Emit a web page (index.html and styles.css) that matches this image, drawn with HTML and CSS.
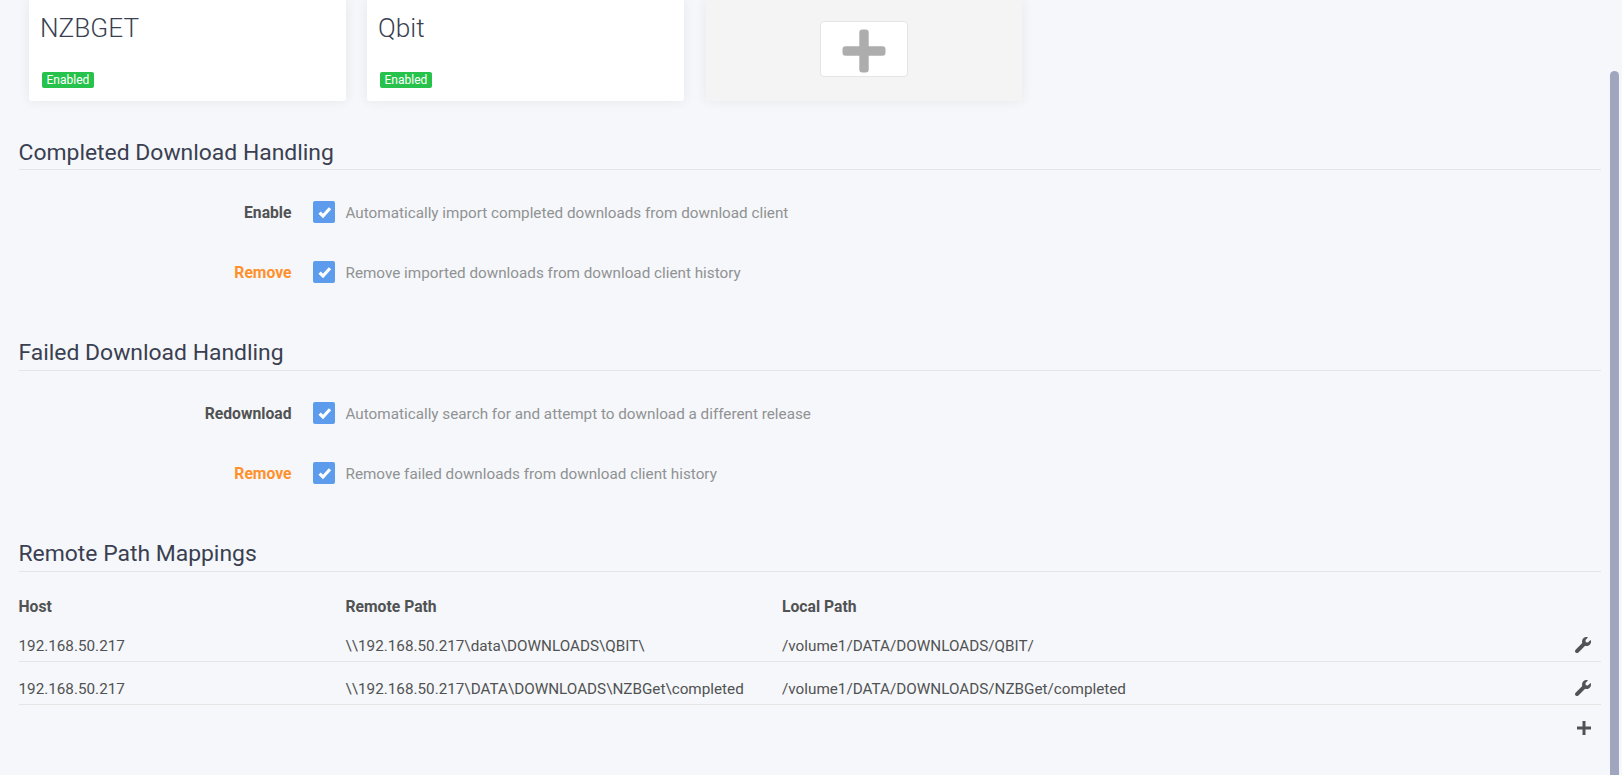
FILE: index.html
```html
<!DOCTYPE html>
<html lang="en">
<head>
<meta charset="utf-8">
<title>Download Clients</title>
<link rel="stylesheet" href="styles.css">
</head>
<body>
<main class="page">
  <div class="cards">
    <div class="card">
      <div class="card-name">NZBGET</div>
      <span class="badge">Enabled</span>
    </div>
    <div class="card">
      <div class="card-name">Qbit</div>
      <span class="badge">Enabled</span>
    </div>
    <div class="card card-add">
      <div class="add-btn">
        <svg class="add-icon" viewBox="0 0 44 44"><rect x="0.500" y="17.300" width="43" height="9.400" rx="3"/><rect x="17.300" y="0.500" width="9.400" height="43" rx="3"/></svg>
      </div>
    </div>
  </div>

  <section class="section section-first">
    <h2 class="legend">Completed Download Handling</h2>
    <div class="field">
      <label class="field-label">Enable</label>
      <span class="check"><svg viewBox="0 0 22 22"><path d="M6.600 11.600L10 15L17 7.200"/></svg></span>
      <span class="help">Automatically import completed downloads from download client</span>
    </div>
    <div class="field">
      <label class="field-label field-advanced">Remove</label>
      <span class="check"><svg viewBox="0 0 22 22"><path d="M6.600 11.600L10 15L17 7.200"/></svg></span>
      <span class="help">Remove imported downloads from download client history</span>
    </div>
  </section>

  <section class="section">
    <h2 class="legend">Failed Download Handling</h2>
    <div class="field">
      <label class="field-label">Redownload</label>
      <span class="check"><svg viewBox="0 0 22 22"><path d="M6.600 11.600L10 15L17 7.200"/></svg></span>
      <span class="help">Automatically search for and attempt to download a different release</span>
    </div>
    <div class="field">
      <label class="field-label field-advanced">Remove</label>
      <span class="check"><svg viewBox="0 0 22 22"><path d="M6.600 11.600L10 15L17 7.200"/></svg></span>
      <span class="help">Remove failed downloads from download client history</span>
    </div>
  </section>

  <section class="section">
    <h2 class="legend">Remote Path Mappings</h2>
    <div class="map-row map-head">
      <span>Host</span><span>Remote Path</span><span>Local Path</span>
    </div>
    <div class="map-row map-item">
      <span>192.168.50.217</span>
      <span>\\192.168.50.217\data\DOWNLOADS\QBIT\</span>
      <span>/volume1/DATA/DOWNLOADS/QBIT/</span>
      <svg class="wrench" viewBox="0 0 512 512"><path d="M507.700 109.100c-2.200-9-13.500-12.100-20.100-5.500l-74.400 74.400-67.900-11.300-11.300-67.900 74.400-74.400c6.600-6.600 3.400-17.900-5.700-20.200-47.400-11.700-99.500 1-136.600 38.100-39.700 39.700-50.300 97.100-33.700 147.200L18.700 404.700c-25 25-25 65.500 0 90.500 25 25 65.500 25 90.500 0l215.300-215.300c50.200 16.700 107.500 6 147.400-33.900 37.200-37.200 49.900-89.400 36.300-136.900z"/></svg>
    </div>
    <div class="map-row map-item">
      <span>192.168.50.217</span>
      <span>\\192.168.50.217\DATA\DOWNLOADS\NZBGet\completed</span>
      <span>/volume1/DATA/DOWNLOADS/NZBGet/completed</span>
      <svg class="wrench" viewBox="0 0 512 512"><path d="M507.700 109.100c-2.200-9-13.500-12.100-20.100-5.500l-74.400 74.400-67.900-11.300-11.300-67.900 74.400-74.400c6.600-6.600 3.400-17.900-5.700-20.200-47.400-11.700-99.500 1-136.600 38.100-39.700 39.700-50.300 97.100-33.700 147.200L18.700 404.700c-25 25-25 65.500 0 90.500 25 25 65.500 25 90.500 0l215.300-215.300c50.200 16.700 107.500 6 147.400-33.900 37.200-37.200 49.900-89.400 36.300-136.900z"/></svg>
    </div>
    <div class="map-add">
      <svg class="plus" viewBox="0 0 14 14"><path d="M7 0V14M0 7H14"/></svg>
    </div>
  </section>
</main>
<div class="scrollbar"></div>
</body>
</html>
```
FILE: styles.css
```css
html, body {
  margin: 0;
  height: 100%;
  overflow: hidden;
  background: #f5f7fa;
  font-family: Roboto, "Liberation Sans", sans-serif;
  font-size: 15.250px;
  color: #515253;
}
.page {
  padding: 0 21px 0 18.500px;
}
.cards {
  display: flex;
  gap: 21.500px;
  padding-left: 10.500px;
}
.card {
  width: 316.500px;
  height: 101px;
  box-sizing: border-box;
  padding: 13px 11px 0;
  background: #fff;
  border-radius: 0 0 3px 3px;
  box-shadow: 0 0 12px 1px rgba(0, 0, 0, 0.06);
  position: relative;
}
.card-name {
  font-size: 26.200px;
  font-weight: 300;
  line-height: 30px;
  color: #3a3f51;
  margin-bottom: 27px;
}
.badge {
  display: inline-block;
  margin-left: 2px;
  padding: 0 4.500px;
  height: 16px;
  line-height: 16px;
  font-size: 12px;
  color: #fff;
  background: #27c24c;
  border-radius: 2px;
}
.card-add {
  width: 316px;
  margin-left: 1px;
  background: #f4f4f4;
  display: flex;
  justify-content: center;
  padding: 21px 0 0;
}
.add-btn {
  width: 88px;
  height: 56px;
  box-sizing: border-box;
  background: #fff;
  border: 1px solid #e5e5e5;
  border-radius: 4px;
  display: flex;
  align-items: center;
  justify-content: center;
}
.add-icon {
  width: 44px;
  height: 44px;
  margin-top: 4px;
  fill: #adadad;
}
.section-first { margin-top: 32px; }
.legend {
  margin: 0;
  height: 37px;
  line-height: 39px;
  font-size: 22.900px;
  font-weight: 400;
  color: #3a3f51;
  border-bottom: 1px solid #e5e5e5;
  box-sizing: border-box;
}
.section + .section .legend { line-height: 37px; }
.field {
  display: flex;
  align-items: center;
  height: 60px;
}
.legend + .field { margin-top: 13px; }
.field-label {
  width: 273px;
  margin-bottom: 2px;
  text-align: right;
  font-weight: 700;
  font-size: 15.700px;
}
.field-advanced { color: #ff902b; }
.check {
  width: 22px;
  height: 22px;
  margin-left: 21.500px;
  margin-bottom: 2px;
  background: #5d9cec;
  border-radius: 2px;
}
.check svg {
  display: block;
  width: 22px;
  height: 22px;
  fill: none;
  stroke: #fff;
  stroke-width: 3.200;
}
.help {
  margin-left: 10.500px;
  color: #909293;
}
.section + .section { margin-top: 31px; }
.map-row {
  display: grid;
  grid-template-columns: 327px 436.500px 1fr 20px;
  align-items: center;
}
.map-head {
  font-weight: 700;
  font-size: 15.700px;
  margin-top: 24px;
  height: 20px;
}
.map-item {
  height: 43px;
  padding-top: 12px;
  border-bottom: 1px solid #e5e5e5;
  box-sizing: border-box;
}
.map-head + .map-item { margin-top: 3px; }
.wrench {
  width: 16px;
  height: 16px;
  margin-bottom: 2px;
  fill: #515253;
  justify-self: end;
  margin-right: 10px;
}
.map-add {
  display: flex;
  justify-content: flex-end;
  padding: 16px 10px 0 0;
}
.plus {
  width: 14px;
  height: 14px;
  fill: none;
  stroke: #515253;
  stroke-width: 3;
}
.scrollbar {
  position: absolute;
  left: 1610px;
  top: 71px;
  width: 9px;
  height: 704px;
  background: #a1a6bf;
  border-radius: 5px 5px 0 0;
}
```
